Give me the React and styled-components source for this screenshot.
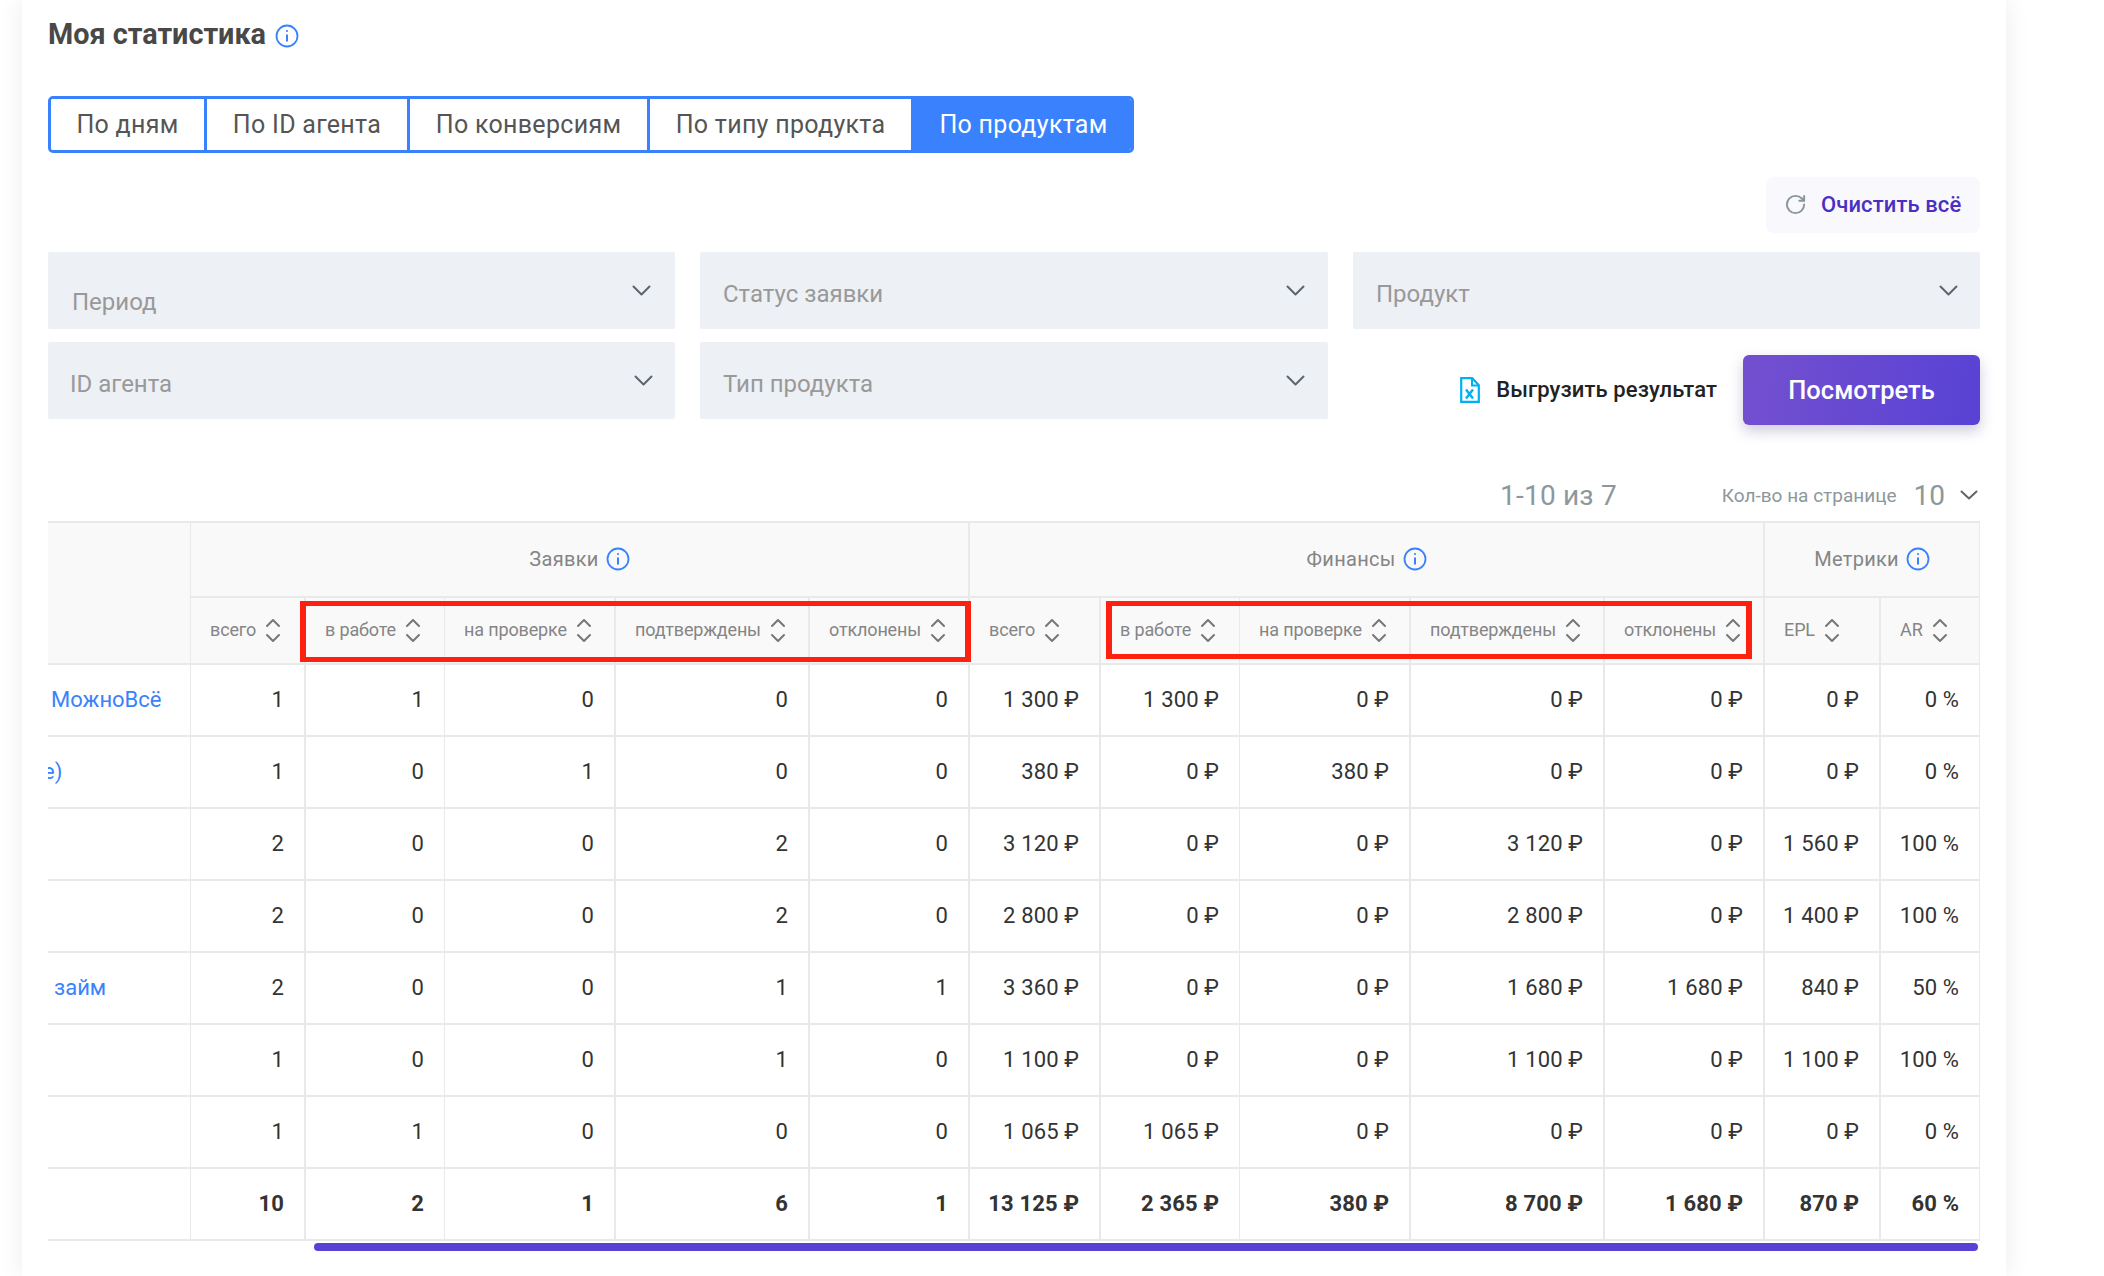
import React from "react";
import styled, { createGlobalStyle } from "styled-components";
import { RotateCw } from "lucide-react";

const GlobalStyle = createGlobalStyle`
  html, body {
    margin: 0;
    background: #fff;
    font-family: Roboto, "Noto Sans", sans-serif;
    overflow: hidden;
  }
`;

const Page = styled.div`
  width: 2104px;
  height: 1276px;
  box-sizing: border-box;
  padding: 0 98px 0 22px;
  overflow: hidden;
`;

const Card = styled.div`
  height: 100%;
  box-sizing: border-box;
  padding: 14px 26px 0;
  background: #fff;
  box-shadow: 0 0 24px rgba(0, 0, 0, 0.08);
`;

const TitleRow = styled.div`
  display: flex;
  align-items: center;
  gap: 9px;
  height: 40px;
`;

const Title = styled.h1`
  margin: 0;
  font-size: 28.8px;
  font-weight: 700;
  color: #484848;
`;

const Tabs = styled.div`
  display: inline-flex;
  margin-top: 42px;
  height: 57px;
  box-sizing: border-box;
  border: 3px solid #3a82fd;
  border-radius: 5px;
  overflow: hidden;
  vertical-align: top;
`;

const Tab = styled.div`
  display: flex;
  align-items: center;
  justify-content: center;
  width: ${(p) => p.$width}px;
  box-sizing: border-box;
  padding-left: ${(p) => (p.$active ? 5 : 0)}px;
  font-size: 25px;
  letter-spacing: 0.3px;
  color: ${(p) => (p.$active ? "#fff" : "#555")};
  background: ${(p) => (p.$active ? "#3a82fd" : "#fff")};
  border-right: ${(p) => (p.$last ? "0" : "3px solid #3a82fd")};
`;

const ClearRow = styled.div`
  display: flex;
  justify-content: flex-end;
  margin-top: 24px;
`;

const ClearButton = styled.button`
  display: flex;
  align-items: center;
  gap: 14px;
  width: 214px;
  height: 56px;
  box-sizing: border-box;
  padding: 0 0 2px 18px;
  border: 0;
  border-radius: 8px;
  background: #f8f8fd;
  color: #4a2fc2;
  font: 500 22px Roboto, sans-serif;
  letter-spacing: 0.1px;
  white-space: nowrap;
`;

const Filters = styled.div`
  display: grid;
  grid-template-columns: 627px 628px 627px;
  grid-template-rows: 77px 77px;
  column-gap: 25px;
  row-gap: 13px;
  margin-top: 19px;
`;

const Select = styled.div`
  display: flex;
  justify-content: space-between;
  box-sizing: border-box;
  padding: 0 ${(p) => p.$chevronRight}px 0 ${(p) => p.$left}px;
  background: #edf0f5;
  border-radius: 2px;
  font-size: 24px;
  color: #999;
`;

const SelectLabel = styled.span`
  margin-top: ${(p) => p.$top}px;
  line-height: 28px;
`;

const Chevron = styled.svg`
  width: 19px;
  height: 11px;
  margin-top: 33px;
  fill: none;
  stroke: #5e666b;
  stroke-width: 2;
  stroke-linecap: round;
  stroke-linejoin: round;
`;

const Actions = styled.div`
  display: flex;
  justify-content: flex-end;
  align-items: flex-start;
  padding-top: 13px;
`;

const ExportLink = styled.div`
  display: flex;
  align-items: center;
  gap: 16px;
  height: 70px;
  margin-right: 26px;
  font-size: 22px;
  font-weight: 500;
  letter-spacing: 0.1px;
  color: #222;
`;

const ExportText = styled.span`
  margin-top: -2px;
`;

const ViewButton = styled.button`
  width: 237px;
  height: 70px;
  border: 0;
  border-radius: 6px;
  background: linear-gradient(100deg, #7450cf, #5842d5);
  box-shadow: 0 6px 14px rgba(60, 50, 120, 0.25);
  color: #fff;
  font: 500 25.5px Roboto, sans-serif;
`;

const Pagination = styled.div`
  display: flex;
  align-items: center;
  justify-content: flex-end;
  height: 40px;
  margin-top: 56px;
  color: #8d979c;
`;

const PageRange = styled.span`
  font-size: 28px;
  letter-spacing: 0.2px;
  margin-right: 105px;
`;

const PerPageLabel = styled.span`
  font-size: 19px;
  margin-right: 17px;
`;

const PerPageValue = styled.span`
  font-size: 28px;
  margin-right: 15px;
`;

const PerPageChevron = styled.svg`
  width: 18px;
  height: 10px;
  margin-right: 2px;
  fill: none;
  stroke: #5e666b;
  stroke-width: 2;
  stroke-linecap: round;
  stroke-linejoin: round;
`;

const TableWrap = styled.div`
  position: relative;
  margin-top: 6px;
  width: 1932px;
`;

const Table = styled.table`
  width: 1932px;
  table-layout: fixed;
  border-collapse: separate;
  border-spacing: 0;
`;

const cellBorders = `
  box-sizing: border-box;
  padding: 0;
  border-bottom: 2px solid #e9e9e9;
`;

const GroupCell = styled.th`
  ${cellBorders}
  height: 77px;
  padding-bottom: 2px;
  border-top: 2px solid #e9e9e9;
  border-right: ${(p) => (p.$thin ? 1 : 2)}px solid #e9e9e9;
  background: #f9f9f9;
  font-size: 20px;
  font-weight: 400;
  letter-spacing: 0.3px;
  color: #858585;
`;

const GroupLabel = styled.span`
  display: inline-flex;
  align-items: center;
  gap: 7px;
`;

const HeadCell = styled.th`
  ${cellBorders}
  height: 67px;
  padding-bottom: 2px;
  border-right: ${(p) => (p.$thin ? 1 : 2)}px solid #e9e9e9;
  background: #f9f9f9;
  font-size: 18px;
  font-weight: 400;
  letter-spacing: -0.15px;
  color: #858585;
`;

const HeadInner = styled.div`
  display: flex;
  align-items: center;
  gap: 9px;
  padding-left: 19px;
  white-space: nowrap;
`;

const SortIcon = styled.svg`
  width: 16px;
  height: 25px;
  flex: none;
  margin-top: 2px;
  fill: none;
  stroke: #777;
  stroke-width: 2;
  stroke-linecap: round;
  stroke-linejoin: round;
`;

const Cell = styled.td`
  ${cellBorders}
  height: 72px;
  padding-right: 20px;
  padding-bottom: 2px;
  border-right: ${(p) => (p.$thin ? 1 : 2)}px solid #e9e9e9;
  text-align: right;
  font-size: 22px;
  letter-spacing: 0.15px;
  font-weight: ${(p) => (p.$bold ? 700 : 400)};
  color: #333;
  white-space: nowrap;
`;

const NameCell = styled.td`
  ${cellBorders}
  height: 72px;
  padding-bottom: 2px;
  border-right: 1px solid #e9e9e9;
  overflow: hidden;
  font-size: 22px;
  color: #3a82fd;
  white-space: nowrap;
`;

const NameLink = styled.span`
  display: block;
  margin-left: ${(p) => p.$indent}px;
`;

const Highlight = styled.div`
  position: absolute;
  top: 80px;
  left: ${(p) => p.$left}px;
  width: ${(p) => p.$width}px;
  height: ${(p) => p.$height}px;
  box-sizing: border-box;
  border: solid #ff2010;
  border-width: 5px 6px;
  pointer-events: none;
`;

const ScrollBar = styled.div`
  height: 8px;
  margin: 2px 2px 0 266px;
  border-radius: 4px;
  background: #5842d5;
`;

const InfoSvg = styled.svg`
  width: ${(p) => p.$size}px;
  height: ${(p) => p.$size}px;
  flex: none;
  margin-top: ${(p) => p.$shift}px;
  fill: none;
  stroke: #3a82fd;
`;

const InfoIcon = ({ size = 24, shift = 0 }) => (
  <InfoSvg $size={size} $shift={shift} viewBox="0 0 24 24">
    <circle cx="12" cy="12" r="10.5" strokeWidth="1.8" />
    <path d="M12 10.5v7" strokeWidth="2" />
    <circle cx="12" cy="7" r="1.1" fill="#3a82fd" stroke="none" />
  </InfoSvg>
);

const SelectChevron = () => (
  <Chevron viewBox="0 0 19 11">
    <path d="M1.5 1.5l8 8 8-8" />
  </Chevron>
);

const Sort = () => (
  <SortIcon viewBox="0 0 16 25">
    <path d="M2 8l6-6 6 6" />
    <path d="M2 17l6 6 6-6" />
  </SortIcon>
);

const ExcelIcon = () => (
  <svg width="20" height="26" viewBox="0 0 20 26" fill="none">
    <path d="M1.2 1.2h11l6.6 7v16.6H1.2z" stroke="#00b0f5" strokeWidth="2.2" />
    <path d="M12 1.5v7h6.5" stroke="#00b0f5" strokeWidth="2" />
    <path d="M6 12.5l7 9M13 12.5l-7 9" stroke="#00b0f5" strokeWidth="2.4" />
  </svg>
);

const tabs = [
  { label: "По дням", width: 156 },
  { label: "По ID агента", width: 203 },
  { label: "По конверсиям", width: 240 },
  { label: "По типу продукта", width: 261 },
  { label: "По продуктам", width: 220, active: true },
];

const columns = [
  { label: "всего", width: 115 },
  { label: "в работе", width: 139, thin: true },
  { label: "на проверке", width: 171 },
  { label: "подтверждены", width: 194 },
  { label: "отклонены", width: 160 },
  { label: "всего", width: 131 },
  { label: "в работе", width: 139, thin: true },
  { label: "на проверке", width: 171 },
  { label: "подтверждены", width: 194 },
  { label: "отклонены", width: 160 },
  { label: "EPL", width: 116 },
  { label: "AR", width: 99, thin: true },
];

const rows = [
  { name: "МожноВсё", indent: 3, values: ["1", "1", "0", "0", "0", "1 300 ₽", "1 300 ₽", "0 ₽", "0 ₽", "0 ₽", "0 ₽", "0 %"] },
  { name: "е)", indent: -5, values: ["1", "0", "1", "0", "0", "380 ₽", "0 ₽", "380 ₽", "0 ₽", "0 ₽", "0 ₽", "0 %"] },
  { name: "", values: ["2", "0", "0", "2", "0", "3 120 ₽", "0 ₽", "0 ₽", "3 120 ₽", "0 ₽", "1 560 ₽", "100 %"] },
  { name: "", values: ["2", "0", "0", "2", "0", "2 800 ₽", "0 ₽", "0 ₽", "2 800 ₽", "0 ₽", "1 400 ₽", "100 %"] },
  { name: "займ", indent: 6, values: ["2", "0", "0", "1", "1", "3 360 ₽", "0 ₽", "0 ₽", "1 680 ₽", "1 680 ₽", "840 ₽", "50 %"] },
  { name: "", values: ["1", "0", "0", "1", "0", "1 100 ₽", "0 ₽", "0 ₽", "1 100 ₽", "0 ₽", "1 100 ₽", "100 %"] },
  { name: "", values: ["1", "1", "0", "0", "0", "1 065 ₽", "1 065 ₽", "0 ₽", "0 ₽", "0 ₽", "0 ₽", "0 %"] },
];

const totals = ["10", "2", "1", "6", "1", "13 125 ₽", "2 365 ₽", "380 ₽", "8 700 ₽", "1 680 ₽", "870 ₽", "60 %"];

const App = () => (
  <Page>
    <GlobalStyle />
    <Card>
      <TitleRow>
        <Title>Моя статистика</Title>
        <InfoIcon shift={4} />
      </TitleRow>

      <Tabs>
        {tabs.map((tab, i) => (
          <Tab key={tab.label} $width={tab.width} $active={tab.active} $last={i >= tabs.length - 2}>
            {tab.label}
          </Tab>
        ))}
      </Tabs>

      <ClearRow>
        <ClearButton>
          <RotateCw size={23} color="#87959a" strokeWidth={2} />
          Очистить всё
        </ClearButton>
      </ClearRow>

      <Filters>
        <Select $left={24} $chevronRight={24}>
          <SelectLabel $top={36}>Период</SelectLabel>
          <SelectChevron />
        </Select>
        <Select $left={23} $chevronRight={23}>
          <SelectLabel $top={28}>Статус заявки</SelectLabel>
          <SelectChevron />
        </Select>
        <Select $left={23} $chevronRight={22}>
          <SelectLabel $top={28}>Продукт</SelectLabel>
          <SelectChevron />
        </Select>
        <Select $left={22} $chevronRight={22}>
          <SelectLabel $top={28}>ID агента</SelectLabel>
          <SelectChevron />
        </Select>
        <Select $left={23} $chevronRight={23}>
          <SelectLabel $top={28}>Тип продукта</SelectLabel>
          <SelectChevron />
        </Select>
        <Actions>
          <ExportLink>
            <ExcelIcon />
            <ExportText>Выгрузить результат</ExportText>
          </ExportLink>
          <ViewButton>Посмотреть</ViewButton>
        </Actions>
      </Filters>

      <Pagination>
        <PageRange>1-10 из 7</PageRange>
        <PerPageLabel>Кол-во на странице</PerPageLabel>
        <PerPageValue>10</PerPageValue>
        <PerPageChevron viewBox="0 0 18 10">
          <path d="M1.5 1.5l7.5 7 7.5-7" />
        </PerPageChevron>
      </Pagination>

      <TableWrap>
        <Table>
          <colgroup>
            <col style={{ width: 143 }} />
            {columns.map((col, i) => (
              <col key={i} style={{ width: col.width }} />
            ))}
          </colgroup>
          <thead>
            <tr>
              <GroupCell rowSpan={2} $thin />
              <GroupCell colSpan={5}>
                <GroupLabel>
                  Заявки <InfoIcon />
                </GroupLabel>
              </GroupCell>
              <GroupCell colSpan={5}>
                <GroupLabel>
                  Финансы <InfoIcon />
                </GroupLabel>
              </GroupCell>
              <GroupCell colSpan={2} $thin>
                <GroupLabel>
                  Метрики <InfoIcon />
                </GroupLabel>
              </GroupCell>
            </tr>
            <tr>
              {columns.map((col, i) => (
                <HeadCell key={i} $thin={col.thin}>
                  <HeadInner>
                    {col.label}
                    <Sort />
                  </HeadInner>
                </HeadCell>
              ))}
            </tr>
          </thead>
          <tbody>
            {rows.map((row, r) => (
              <tr key={r}>
                <NameCell>
                  <NameLink $indent={row.indent}>{row.name}</NameLink>
                </NameCell>
                {row.values.map((value, i) => (
                  <Cell key={i} $thin={columns[i].thin}>
                    {value}
                  </Cell>
                ))}
              </tr>
            ))}
            <tr>
              <NameCell />
              {totals.map((value, i) => (
                <Cell key={i} $bold $thin={columns[i].thin}>
                  {value}
                </Cell>
              ))}
            </tr>
          </tbody>
        </Table>
        <Highlight $left={252} $width={671} $height={61} />
        <Highlight $left={1058} $width={646} $height={58} />
      </TableWrap>
      <ScrollBar />
    </Card>
  </Page>
);

export default App;
